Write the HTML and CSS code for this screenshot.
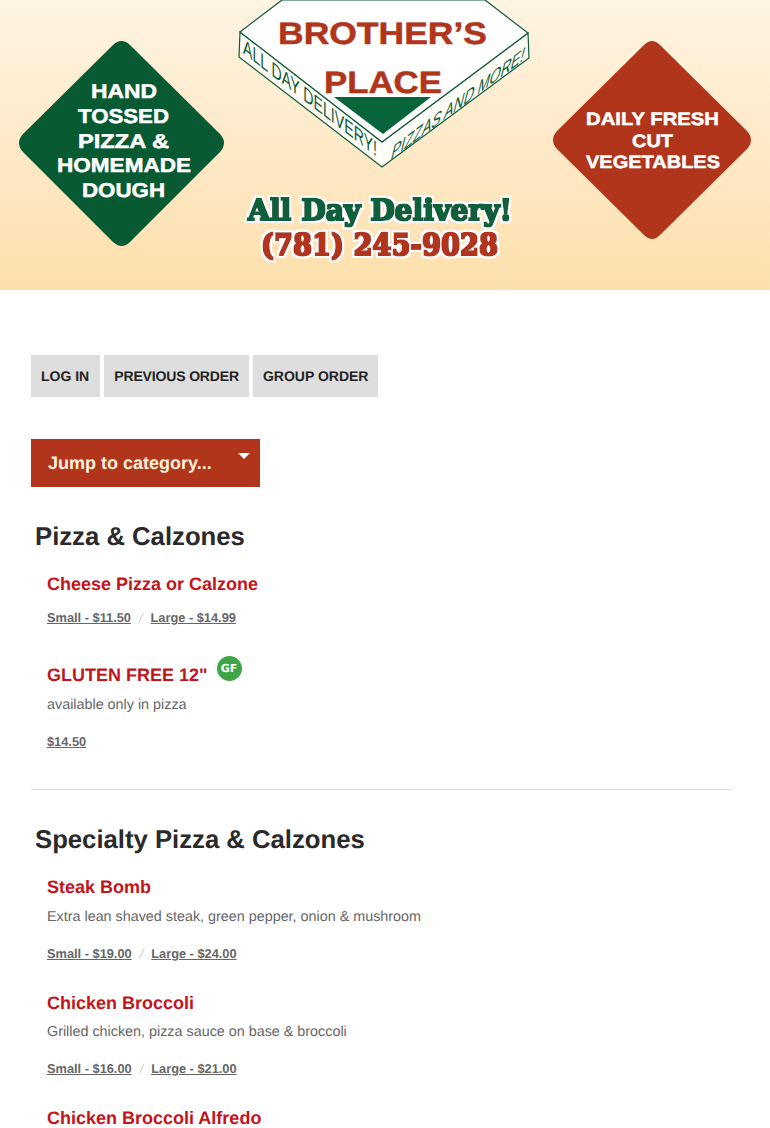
FILE: index.html
```html
<!DOCTYPE html>
<html>
<head>
  <title>Brother's Place</title>
  <link rel="stylesheet" href="styles.css">
</head>
<body>
  <header class="banner">
    <svg class="banner-art" width="770" height="290" viewBox="0 0 770 290">
      <defs>
        <filter id="heavy" x="-5%" y="-20%" width="110%" height="140%">
          <feMorphology in="SourceGraphic" operator="dilate" radius="0.7" result="fat"/>
          <feMorphology in="SourceAlpha" operator="dilate" radius="3" result="outer"/>
          <feFlood flood-color="#fff"/>
          <feComposite in2="outer" operator="in" result="halo"/>
          <feMerge>
            <feMergeNode in="halo"/>
            <feMergeNode in="fat"/>
          </feMerge>
        </filter>
      </defs>

      <!-- left diamond -->
      <path class="diamond-green" d="M121.500 41 Q126 41 130 45 L220 134 Q228 143 220 152 L130 242 Q122 250 113 242 L23 152 Q15 143 23 134 L113 45 Q117 41 121.500 41 Z"/>
      <g class="diamond-text">
        <text x="124" y="98" textLength="66" lengthAdjust="spacingAndGlyphs">HAND</text>
        <text x="123.500" y="123" textLength="91" lengthAdjust="spacingAndGlyphs">TOSSED</text>
        <text x="123.500" y="147.500" textLength="91" lengthAdjust="spacingAndGlyphs">PIZZA &amp;</text>
        <text x="124" y="172" textLength="134" lengthAdjust="spacingAndGlyphs">HOMEMADE</text>
        <text x="123.500" y="196.500" textLength="83" lengthAdjust="spacingAndGlyphs">DOUGH</text>
      </g>

      <!-- right diamond -->
      <path class="diamond-red" d="M652 41 Q656 41 660 45 L747 131 Q755 140 747 149 L660 235 Q652 243 644 235 L557 149 Q549 140 557 131 L644 45 Q648 41 652 41 Z"/>
      <g class="diamond-text diamond-text-small">
        <text x="652.500" y="125" textLength="133" lengthAdjust="spacingAndGlyphs">DAILY FRESH</text>
        <text x="652.500" y="146.500" textLength="41" lengthAdjust="spacingAndGlyphs">CUT</text>
        <text x="653" y="168" textLength="134" lengthAdjust="spacingAndGlyphs">VEGETABLES</text>
      </g>

      <!-- pizza box logo -->
      <path class="box-side" d="M240 32 L382 142 L528 33 L529 58 L382 167 L239 57 Z"/>
      <path class="box-top" d="M282 0 L485 0 L528 33 L382 142 L240 32 Z"/>
      <path class="box-tri" d="M334 97 L431 97 L383 134 Z"/>
      <text class="logo-word" x="278" y="44" textLength="209" lengthAdjust="spacingAndGlyphs">BROTHER’S</text>
      <text class="logo-word" x="324" y="93" textLength="118" lengthAdjust="spacingAndGlyphs">PLACE</text>
      <text class="box-print" transform="matrix(1 0.775 0 1 243 53)" textLength="134" lengthAdjust="spacingAndGlyphs">ALL DAY DELIVERY!</text>
      <text class="box-print" transform="matrix(1 -0.747 -0.25 1 390 160)" textLength="133" lengthAdjust="spacingAndGlyphs">PIZZAS AND MORE!</text>

      <!-- delivery lines -->
      <text class="delivery delivery-green" x="248" y="220" textLength="264" lengthAdjust="spacingAndGlyphs" filter="url(#heavy)">All Day Delivery!</text>
      <text class="delivery delivery-red" x="261" y="255" textLength="237" lengthAdjust="spacingAndGlyphs" filter="url(#heavy)">(781) 245-9028</text>
    </svg>
  </header>

  <main class="content">
    <nav class="account-nav">
      <a class="account-btn">LOG IN</a>
      <a class="account-btn account-btn-tight">PREVIOUS ORDER</a>
      <a class="account-btn">GROUP ORDER</a>
    </nav>

    <div class="jump">
      <span>Jump to category...</span>
      <span class="jump-arrow"></span>
    </div>

    <section class="category">
      <h2>Pizza &amp; Calzones</h2>

      <div class="item item-first">
        <h3>Cheese Pizza or Calzone</h3>
        <p class="prices"><a>Small - $11.50</a><i>/</i><a>Large - $14.99</a></p>
      </div>

      <div class="item item-gf">
        <h3>GLUTEN FREE 12"<span class="gf-badge">GF</span></h3>
        <p class="desc">available only in pizza</p>
        <p class="prices"><a>$14.50</a></p>
      </div>
    </section>

    <section class="category category-next">
      <h2>Specialty Pizza &amp; Calzones</h2>

      <div class="item item-first">
        <h3>Steak Bomb</h3>
        <p class="desc">Extra lean shaved steak, green pepper, onion &amp; mushroom</p>
        <p class="prices"><a>Small - $19.00</a><i>/</i><a>Large - $24.00</a></p>
      </div>

      <div class="item">
        <h3>Chicken Broccoli</h3>
        <p class="desc">Grilled chicken, pizza sauce on base &amp; broccoli</p>
        <p class="prices"><a>Small - $16.00</a><i>/</i><a>Large - $21.00</a></p>
      </div>

      <div class="item">
        <h3>Chicken Broccoli Alfredo</h3>
      </div>
    </section>
  </main>
</body>
</html>
```

FILE: styles.css
```css
/* page */
html, body {
  height: 1128px;
  overflow: hidden;
}

body {
  font-family: "Liberation Sans", Arial, sans-serif;
  text-rendering: geometricPrecision;
  background-color: #fff;
  margin: 0;
  padding: 0;
}

/* banner */
.banner {
  height: 290px;
  background: linear-gradient(to bottom, #fff4e3 0%, #fddfac 100%);
}

.banner-art {
  display: block;
}

.diamond-green {
  fill: #075a32;
}

.diamond-red {
  fill: #b0351b;
}

.diamond-text text {
  font-weight: bold;
  font-size: 20px;
  fill: #fff;
  stroke: #fff;
  stroke-width: 0.5;
  text-anchor: middle;
}

.diamond-text-small text {
  font-size: 18px;
}

.box-side {
  fill: #fffdf8;
  stroke: #0f5a36;
  stroke-width: 1.2;
}

.box-top {
  fill: #fff;
  stroke: #0f5a36;
  stroke-width: 1.2;
}

.box-tri {
  fill: #08643a;
}

.logo-word {
  font-weight: bold;
  font-size: 31px;
  fill: #b0351b;
  stroke: #b0351b;
  stroke-width: 0.5;
}

.box-print {
  font-size: 21px;
  fill: #0f5a36;
}

.delivery {
  font-family: "DejaVu Serif", serif;
  font-weight: bold;
}

.delivery-green {
  font-size: 29px;
  fill: #08603a;
}

.delivery-red {
  font-size: 30px;
  fill: #b0351b;
}

/* main column */
.content {
  padding: 65px 38px 0 31px;
}

.account-nav {
  display: flex;
  gap: 4px;
}

.account-btn {
  display: block;
  background-color: #dedede;
  color: #222;
  font-size: 14px;
  font-weight: bold;
  line-height: 42px;
  padding: 0 10px;
}

.account-btn:first-child {
  padding-right: 11px;
}

.account-btn-tight {
  letter-spacing: -0.15px;
}

.jump {
  display: flex;
  justify-content: space-between;
  width: 229px;
  height: 48px;
  box-sizing: border-box;
  margin-top: 42px;
  padding: 0 10px 0 17px;
  background-color: #b0351b;
  color: #fdf0df;
  font-size: 18px;
  font-weight: bold;
  line-height: 48px;
}

.jump-arrow {
  width: 0;
  height: 0;
  margin-top: 14px;
  border-left: 6.500px solid transparent;
  border-right: 6.500px solid transparent;
  border-top: 6px solid #fff;
}

/* menu */
.category {
  padding-bottom: 39px;
  border-bottom: 1px solid #ddd;
}

.category-next {
  border-bottom: none;
}

h2 {
  margin: 34px 0 0 4px;
  color: #2a2a2a;
  font-size: 25.700px;
  line-height: 32px;
}

.item {
  padding-left: 16px;
  margin-top: 29px;
}

.item-first {
  margin-top: 19px;
}

.item-gf {
  margin-top: 37px;
}

h3 {
  margin: 0;
  color: #c4141a;
  font-size: 18px;
  line-height: 24px;
}

.gf-badge {
  display: inline-block;
  position: relative;
  top: -8px;
  width: 25px;
  height: 25px;
  margin-left: 9px;
  border-radius: 50%;
  background-color: #3fa648;
  color: #fff;
  font-family: "DejaVu Sans", sans-serif;
  font-size: 11px;
  line-height: 25px;
  text-align: center;
  vertical-align: middle;
}

.desc {
  margin: 8px 0 0;
  color: #666;
  font-size: 14.350px;
  line-height: 18px;
}

.item-first .desc {
  margin-top: 9px;
}

.item-gf .desc {
  margin-top: 7px;
}

.prices {
  margin: 20px 0 0;
  color: #666;
  font-size: 12.800px;
  font-weight: bold;
  line-height: 16px;
}

.prices a {
  text-decoration: underline;
}

.prices i {
  margin: 0 8px;
  color: #ccc;
  font-weight: normal;
}

.item-first h3 + .prices {
  margin-top: 14px;
}
```
